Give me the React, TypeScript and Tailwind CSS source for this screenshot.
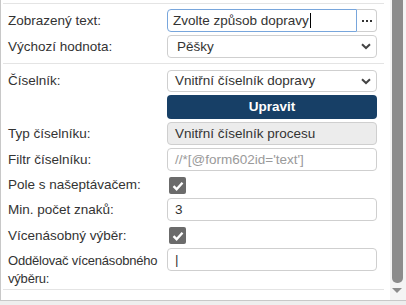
import React from "react";

const Chevron = () => (
  <svg width="10" height="7" viewBox="0 0 10 7" className="shrink-0">
    <path d="M1 1.2 L5 5 L9 1.2" fill="none" stroke="#444" strokeWidth="2" />
  </svg>
);

const Check = () => (
  <div className="w-[17px] h-[17px] rounded-[2px] bg-[#6b6b6b] flex items-center justify-center">
    <svg width="12" height="10" viewBox="0 0 12 10">
      <path d="M1.5 5.2 L4.6 8.2 L10.5 1.8" fill="none" stroke="#fff" strokeWidth="2.4" />
    </svg>
  </div>
);

const Label = ({ children }: { children: React.ReactNode }) => (
  <div className="w-[166px] shrink-0 pl-[7px] text-[#333]">{children}</div>
);

const box = "h-[23px] w-[210px] border border-[#cfcfcf] rounded-[4px] flex items-center px-[7px]";

export default function App() {
  return (
    <div
      className="w-[406px] h-[305px] bg-white overflow-hidden relative text-[13.5px] leading-[18px]"
      style={{ fontFamily: '"Liberation Sans", Arial, sans-serif' }}
    >
      <div className="flex h-[301px] border-l border-b border-[#c8c8c8]">
        <div className="w-[389px] flex flex-col">
          <div className="mt-[3px] ml-[2px] w-[381px] border-t border-[#e4e4e4]" />
          <div className="flex flex-col gap-[3px] mt-[5px]">
            <div className="flex items-center h-[23px]">
              <Label>Zobrazený text:</Label>
              <div className="flex w-[210px] h-[23px]">
                <div className="flex-1 h-[23px] border border-[#78a6dc] rounded-l-[4px] flex items-center px-[5px] text-[#333]">
                  Zvolte způsob dopravy<span className="inline-block w-px h-[15px] bg-black ml-[1px]" />
                </div>
                <div className="w-[20px] h-[23px] border border-l-0 border-[#cfcfcf] rounded-r-[4px] flex items-center justify-center gap-[2px]">
                  <span className="w-[2px] h-[2px] bg-[#333]" />
                  <span className="w-[2px] h-[2px] bg-[#333]" />
                  <span className="w-[2px] h-[2px] bg-[#333]" />
                </div>
              </div>
            </div>
            <div className="flex items-center h-[23px]">
              <Label>Výchozí hodnota:</Label>
              <div className={box + " justify-between text-[#333] pr-[5px]"}>
                <span className="pl-[2px]">Pěšky</span>
                <Chevron />
              </div>
            </div>
          </div>
          <div className="mt-[5px] ml-[2px] w-[381px] border-t border-[#e4e4e4]" />
          <div className="flex flex-col gap-[3px] mt-[6px]">
            <div className="flex items-center h-[22px]">
              <Label>Číselník:</Label>
              <div className={"h-[22px] w-[210px] border border-[#cfcfcf] rounded-[4px] flex items-center px-[7px] justify-between text-[#333] pr-[5px]"}>
                <span>Vnitřní číselník dopravy</span>
                <Chevron />
              </div>
            </div>
            <div className="flex items-center h-[24px]">
              <div className="w-[166px] shrink-0" />
              <div className="h-[24px] w-[210px] rounded-[4px] bg-[#173f66] text-white font-bold flex items-center justify-center">
                Upravit
              </div>
            </div>
            <div className="flex items-center h-[23px]">
              <Label>Typ číselníku:</Label>
              <div className={box + " bg-[#ececec] text-[#333] px-[5px]"}>Vnitřní číselník procesu</div>
            </div>
            <div className="flex items-center h-[23px]">
              <Label>Filtr číselníku:</Label>
              <div className={box + " text-[#9a9a9a] px-[5px]"}>//*[@form602id='text']</div>
            </div>
            <div className="flex items-start h-[21px]">
              <div className="w-[166px] shrink-0 pl-[7px] text-[#333] pt-[2px]">Pole s našeptávačem:</div>
              <div className="pt-[3px] pl-[2px]">
                <Check />
              </div>
            </div>
            <div className="flex items-center h-[23px]">
              <Label>Min. počet znaků:</Label>
              <div className={box + " text-[#333] px-[5px]"}>3</div>
            </div>
            <div className="flex items-start h-[21px]">
              <div className="w-[166px] shrink-0 pl-[7px] text-[#333] pt-[3px]">Vícenásobný výběr:</div>
              <div className="pt-[3px] pl-[2px]">
                <Check />
              </div>
            </div>
            <div className="flex items-start">
              <div className="w-[166px] shrink-0 pl-[7px] pt-[4px] text-[#333] whitespace-nowrap text-[13px] tracking-[-0.2px]">
                Oddělovač vícenásobného
                <br />
                výběru:
              </div>
              <div className={box + " text-[#333] px-[5px]"}>|</div>
            </div>
          </div>
          <div className="mt-[1px] ml-[2px] w-[381px] border-t border-[#e4e4e4]" />
        </div>
        <div className="flex-1 bg-[#f4f4f4] flex flex-col items-center">
          <div className="w-[11px] h-[283px] bg-[#8c8c8c] rounded-b-[5px] ml-[-2px]" />
          <div className="mt-[5px] ml-[-2px] w-0 h-0 border-l-[5px] border-r-[5px] border-t-[5px] border-l-transparent border-r-transparent border-t-[#8c8c8c]" />
        </div>
      </div>
      <div className="h-[4px] bg-[#eeeeee]" />
    </div>
  );
}
